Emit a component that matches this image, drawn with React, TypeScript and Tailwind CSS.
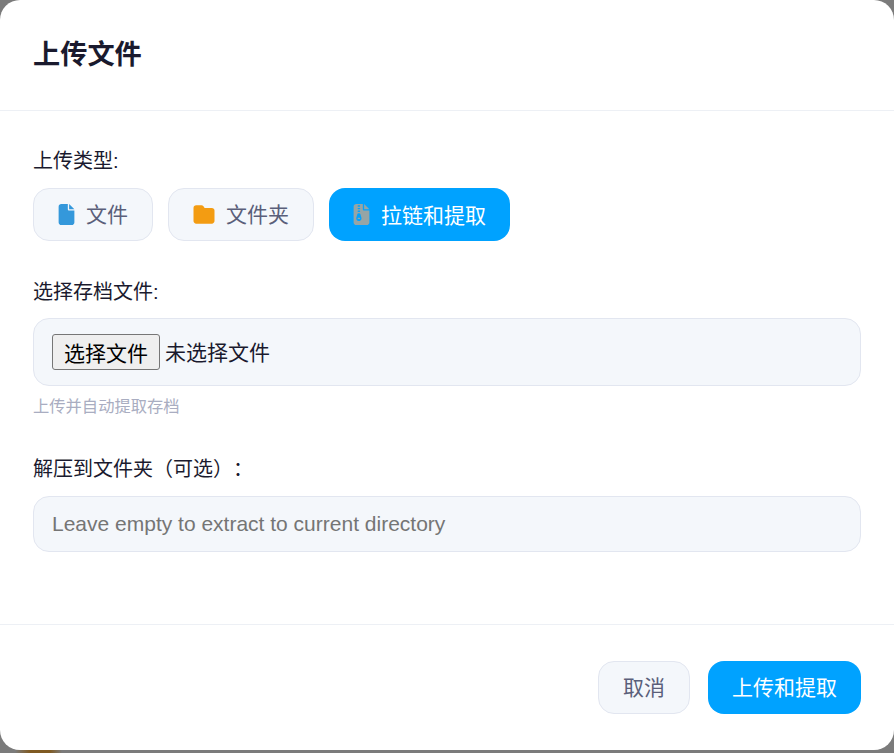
import React from 'react';
import { FaFile, FaFolder, FaFileZipper } from 'react-icons/fa6';

export default function App() {
  return (
    <div className="h-[753px] w-[894px] overflow-hidden bg-[#7b7b7b] font-['Liberation_Sans','Noto_Sans_CJK_SC',sans-serif]">
      <div className="flex h-[750px] w-full flex-col rounded-[20px] bg-white">
        {/* Header */}
        <div className="flex h-[111px] shrink-0 items-center border-b border-[#edf0f5] px-[33px]">
          <h2 className="text-[27.2px] font-bold text-[#1a1a2e]">上传文件</h2>
        </div>

        {/* Body */}
        <div className="flex-1 px-[33px] pt-[37px]">
          <label className="block text-[20px] leading-[26px] text-[#1a1a2e]">上传类型:</label>
          <div className="mt-[14px] flex gap-[15px]">
            <button className="flex h-[53px] items-center gap-[11px] rounded-[16px] border border-[#e2e6f0] bg-[#f4f7fb] px-[24px] text-[21px] text-[#5a5f7a]">
              <FaFile className="h-[21px] w-[17px] text-[#3498db]" />
              文件
            </button>
            <button className="flex h-[53px] items-center gap-[11px] rounded-[16px] border border-[#e2e6f0] bg-[#f4f7fb] px-[24px] text-[21px] text-[#5a5f7a]">
              <FaFolder className="h-[21px] w-[22px] text-[#f39c12]" />
              文件夹
            </button>
            <button className="flex h-[53px] items-center gap-[11px] rounded-[16px] bg-[#00a2ff] px-[24px] pt-[2px] text-[21px] text-white">
              <FaFileZipper className="-mt-[2px] h-[21px] w-[17px] text-[#95a5a6]" />
              拉链和提取
            </button>
          </div>

          <label className="mt-[38px] block text-[20px] leading-[26px] text-[#1a1a2e]">选择存档文件:</label>
          <div className="mt-[13px] flex h-[68px] items-center gap-[5px] rounded-[16px] border border-[#e2e6f0] bg-[#f4f7fb] px-[18px] text-[21px] text-[#1a1a2e]">
            <button className="h-[36px] w-[108px] rounded-[3px] border border-[#767676] bg-[#efefef] pt-[2px] text-[21px] leading-none text-black">选择文件</button>
            <span className="pt-[2px]">未选择文件</span>
          </div>
          <p className="mt-[8px] text-[16.3px] leading-[24px] text-[#a9adc1]">上传并自动提取存档</p>

          <label className="mt-[38px] block text-[20px] leading-[26px] text-[#1a1a2e] [text-spacing-trim:space-all]">解压到文件夹（可选）：</label>
          <input
            readOnly
            placeholder="Leave empty to extract to current directory"
            className="mt-[14px] block h-[56px] w-full rounded-[16px] border border-[#e2e6f0] bg-[#f4f7fb] px-[18px] text-[21px] outline-none placeholder:text-[#757575]"
          />
        </div>

        {/* Footer */}
        <div className="flex h-[126px] shrink-0 justify-end gap-[18px] border-t border-[#edf0f5] px-[33px] pt-[36px]">
          <button className="h-[53px] w-[92px] rounded-[16px] border border-[#e2e6f0] bg-[#f4f7fb] pt-[1px] text-[21px] text-[#5a5f7a]">取消</button>
          <button className="h-[53px] w-[153px] rounded-[16px] bg-[#00a2ff] pt-[1px] text-[21px] text-white">上传和提取</button>
        </div>
      </div>
      <div className="h-[3px] w-full bg-[linear-gradient(90deg,#7b7b7b_15px,#7f5a22_30px,#7f5a22_50px,#7b7b7b_62px)]" />
    </div>
  );
}
